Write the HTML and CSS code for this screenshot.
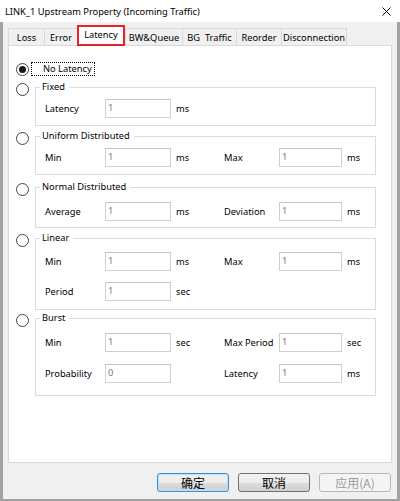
FILE: index.html
```html
<!DOCTYPE html>
<html lang="en">
<head>
    <meta charset="UTF-8">
    <title>LINK_1 Upstream Property</title>
    <link rel="stylesheet" href="styles.css">
</head>
<body>

<!-- Title bar -->
<div class="titlebar">
    <span class="title">LINK_1 Upstream Property (Incoming Traffic)</span>
    <svg class="close" width="9" height="9" viewBox="0 0 9 9">
        <path d="M0.5 0.5 L8.5 8.5 M8.5 0.5 L0.5 8.5" stroke="#000" stroke-width="1" fill="none"/>
    </svg>
</div>

<div class="frame">
    <div class="tabs">
        <div class="tab tab-loss">Loss</div>
        <div class="tab tab-error">Error</div>
        <div class="tab tab-latency selected">Latency</div>
        <div class="tab tab-bw">BW&amp;Queue</div>
        <div class="tab tab-bg">BG  Traffic</div>
        <div class="tab tab-reorder">Reorder</div>
        <div class="tab tab-disc">Disconnection</div>
    </div>

    <div class="panel">
        <div class="option option-none">
            <span class="radio checked"></span>
            <span class="focus-label">No Latency</span>
        </div>

        <div class="option option-fixed">
            <span class="radio"></span>
            <fieldset class="group">
                <legend>Fixed</legend>
                <div class="field-row">
                    <span>Latency</span><input class="num" type="text" value="1"><span class="unit">ms</span>
                </div>
            </fieldset>
        </div>

        <div class="option">
            <span class="radio"></span>
            <fieldset class="group">
                <legend>Uniform Distributed</legend>
                <div class="field-row">
                    <span>Min</span><input class="num" type="text" value="1"><span class="unit">ms</span>
                    <span>Max</span><input class="num num-right" type="text" value="1"><span class="unit">ms</span>
                </div>
            </fieldset>
        </div>

        <div class="option option-normal">
            <span class="radio"></span>
            <fieldset class="group group-normal">
                <legend>Normal Distributed</legend>
                <div class="field-row">
                    <span>Average</span><input class="num" type="text" value="1"><span class="unit">ms</span>
                    <span>Deviation</span><input class="num num-right" type="text" value="1"><span class="unit">ms</span>
                </div>
            </fieldset>
        </div>

        <div class="option">
            <span class="radio"></span>
            <fieldset class="group group-linear">
                <legend>Linear</legend>
                <div class="rows">
                    <div class="field-row">
                        <span>Min</span><input class="num" type="text" value="1"><span class="unit">ms</span>
                        <span>Max</span><input class="num num-right" type="text" value="1"><span class="unit">ms</span>
                    </div>
                    <div class="field-row">
                        <span>Period</span><input class="num" type="text" value="1"><span class="unit">sec</span>
                    </div>
                </div>
            </fieldset>
        </div>

        <div class="option option-burst">
            <span class="radio"></span>
            <fieldset class="group group-burst">
                <legend>Burst</legend>
                <div class="rows rows-wide">
                    <div class="field-row">
                        <span>Min</span><input class="num" type="text" value="1"><span class="unit">sec</span>
                        <span>Max Period</span><input class="num num-right" type="text" value="1"><span class="unit">sec</span>
                    </div>
                    <div class="field-row">
                        <span>Probability</span><input class="num" type="text" value="0"><span class="unit"></span>
                        <span>Latency</span><input class="num num-right" type="text" value="1"><span class="unit">ms</span>
                    </div>
                </div>
            </fieldset>
        </div>
    </div>

    <div class="buttons">
        <button class="btn btn-default">确定</button>
        <button class="btn">取消</button>
        <button class="btn btn-disabled">应用(A)</button>
    </div>
</div>

</body>
</html>
```

FILE: styles.css
```css
body {
    margin: 0;
    width: 400px;
    height: 501px;
    overflow: hidden;
    background-color: #fff;
    font-family: "Noto Sans", "Noto Sans CJK SC", sans-serif;
    font-size: 9.3px;
    color: #000;
}

.titlebar {
    display: flex;
    justify-content: space-between;
    align-items: center;
    height: 22px;
    padding: 0 9px 0 5px;
    background-color: #fff;
}

.close {
    display: block;
}

.frame {
    box-sizing: border-box;
    height: 479px;
    padding-top: 6px;
    background-color: #f0f0f0;
    border: solid #a3a3a3;
    border-width: 0 3px 2px 3px;
}

/* tab strip */
.tabs {
    display: flex;
    align-items: flex-end;
    height: 17px;
    margin-left: 5px;
}

.tab {
    box-sizing: border-box;
    height: 17px;
    line-height: 16px;
    padding-top: 1px;
    margin-right: -1px;
    text-align: center;
    white-space: pre;
    background-color: #f0f0f0;
    border: 1px solid #d9d9d9;
    border-bottom: none;
}

.tab-loss { width: 37px; }
.tab-error { width: 34px; }
.tab-latency { width: 48px; }
.tab-bw { width: 58px; }
.tab-bg { width: 55px; }
.tab-reorder { width: 46px; }
.tab-disc { width: 66px; }

.tab.selected {
    position: relative;
    z-index: 1;
    height: 21px;
    line-height: 18px;
    margin-right: 0;
    margin-bottom: -1px;
    background-color: #fff;
    border: none;
    outline: 2px solid #e8232a;
    outline-offset: -2px;
}

/* tab page */
.panel {
    box-sizing: border-box;
    height: 418px;
    margin: 0 5px;
    padding: 16px 15px 0 7px;
    background-color: #fff;
    border: 1px solid #d9d9d9;
}

.option {
    display: flex;
    align-items: flex-start;
    margin-top: 3px;
}

.option-none {
    align-items: center;
    margin-top: 0;
}

.option-fixed { margin-top: 4px; }
.option-normal { margin-top: 5px; }
.option-burst { margin-top: 1px; }

.radio {
    box-sizing: border-box;
    display: flex;
    justify-content: center;
    align-items: center;
    flex-shrink: 0;
    width: 13px;
    height: 13px;
    margin-top: 3px;
    margin-right: 6px;
    border: 1px solid #444;
    border-radius: 50%;
    background-color: #fff;
}

.option-none .radio {
    margin: 0 2px 0 0;
}

.radio.checked::after {
    content: "";
    width: 7px;
    height: 7px;
    border-radius: 50%;
    background-color: #1a1a1a;
}

.focus-label {
    height: 12px;
    line-height: 12px;
    padding: 0 2px 0 11px;
    border: 1px dotted #000;
}

.group {
    flex: 1;
    min-width: 0;
    margin: 0;
    padding: 5px 0 7px 9px;
    border: 1px solid #dcdcdc;
}

.group-normal { padding: 8px 0 6px 9px; }
.group-linear { padding: 7px 0 8px 9px; }
.group-burst { padding: 8px 0 12px 9px; }

.group legend {
    line-height: 14px;
    margin-left: -5px;
    padding: 0 4px 0 2px;
}

.rows {
    display: flex;
    flex-direction: column;
    gap: 11px;
}

.rows-wide {
    gap: 12px;
}

.field-row {
    display: grid;
    grid-template-columns: 60px 66px 53px 55px 63px auto;
    align-items: center;
    height: 19px;
}

.unit {
    padding-left: 5px;
}

.num {
    box-sizing: border-box;
    width: 66px;
    height: 19px;
    margin: 0;
    padding: 0 2px 3px;
    font-family: inherit;
    font-size: 9.3px;
    color: #7b7b7b;
    background-color: #fff;
    border: 1px solid #cfcfcf;
    border-top-color: #c4c4c4;
    outline: none;
}

.num-right {
    width: 63px;
}

/* dialog buttons */
.buttons {
    display: flex;
    justify-content: flex-end;
    gap: 9px;
    margin-top: 10px;
    padding-right: 6px;
}

.btn {
    box-sizing: border-box;
    width: 72px;
    height: 19px;
    padding: 0;
    font-family: "Noto Sans CJK SC", sans-serif;
    font-size: 12px;
    line-height: 16px;
    color: #000;
    border: 1px solid #707070;
    border-radius: 3px;
    background: linear-gradient(#f2f2f2, #ebebeb 50%, #dddddd 51%, #cfcfcf);
}

.btn-default {
    border-color: #3c8fd4;
    box-shadow: inset 0 0 0 1px #b9e2fa;
}

.btn-disabled {
    color: #9a9a9a;
    border-color: #b7b7b7;
    background: #f4f4f4;
}
```
